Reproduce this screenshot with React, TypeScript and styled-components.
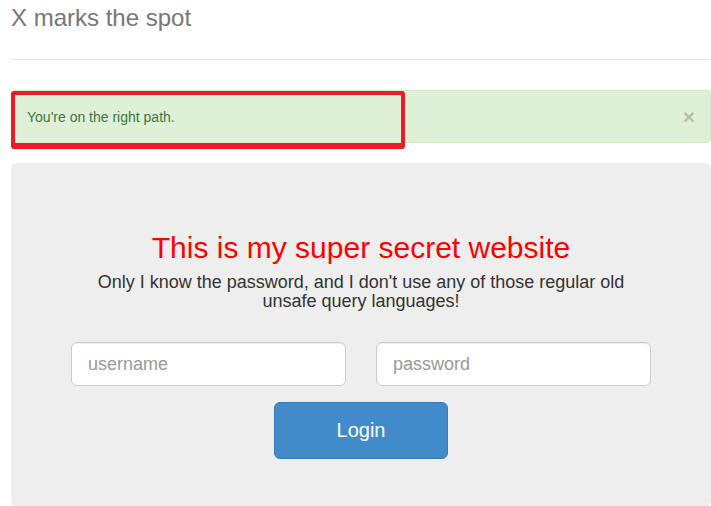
import React from "react";
import styled, { createGlobalStyle } from "styled-components";

const GlobalStyle = createGlobalStyle`
  body {
    margin: 0;
    background: #fff;
    font-family: "Liberation Sans", Arial, sans-serif;
    font-size: 14px;
    line-height: 20px;
    color: #333;
  }
`;

const App = (): JSX.Element => {
  return (
    <>
      <GlobalStyle />
      <Page>
        <Header>
          <HeaderTitle>X marks the spot</HeaderTitle>
        </Header>

        <AlertWrap>
          <Alert>
            <span>You're on the right path.</span>
            <CloseBtn type="button" aria-label="Close">
              ×
            </CloseBtn>
          </Alert>
          <Highlight />
        </AlertWrap>

        <Jumbotron>
          <JumboTitle>This is my super secret website</JumboTitle>
          <JumboText>
            Only I know the password, and I don't use any of those regular old
            <br />
            unsafe query languages!
          </JumboText>
          <LoginForm onSubmit={(e) => e.preventDefault()}>
            <InputRow>
              <TextInput type="text" placeholder="username" />
              <TextInput type="password" placeholder="password" />
            </InputRow>
            <LoginButton type="submit">Login</LoginButton>
          </LoginForm>
        </Jumbotron>
      </Page>
    </>
  );
};

const Page = styled.div`
  width: 700px;
  padding-left: 11px;
`;

const Header = styled.div`
  padding: 5px 0 28px;
  border-bottom: 1px solid #e5e5e5;
  margin-bottom: 30px;
`;

const HeaderTitle = styled.h3`
  margin: 0;
  font-size: 24px;
  font-weight: 400;
  line-height: 26px;
  color: #777;
`;

const AlertWrap = styled.div`
  position: relative;
  margin-bottom: 20px;
`;

const Alert = styled.div`
  display: flex;
  align-items: center;
  justify-content: space-between;
  padding: 15px;
  background: #dff0d8;
  border: 1px solid #d6e9c6;
  border-radius: 4px;
  color: #3c763d;
`;

const CloseBtn = styled.button`
  padding: 0;
  border: 0;
  background: transparent;
  font-family: inherit;
  font-size: 21px;
  font-weight: 700;
  line-height: 1;
  color: #000;
  opacity: 0.2;
  cursor: pointer;
`;

const Highlight = styled.div`
  position: absolute;
  left: 0;
  top: 1px;
  width: 394px;
  height: 58px;
  box-sizing: border-box;
  border: 4px solid #ed1c24;
  border-bottom-width: 6px;
  border-radius: 3px;
  pointer-events: none;
`;

const Jumbotron = styled.div`
  padding: 48px 60px;
  background: #eee;
  border-radius: 6px;
  text-align: center;
`;

const JumboTitle = styled.h2`
  margin: 20px 0 10px;
  font-size: 30px;
  font-weight: 400;
  line-height: 33px;
  color: #ff0000;
`;

const JumboText = styled.p`
  margin: -1px 0 31px;
  font-size: 18px;
  line-height: 19px;
  color: #333;
`;

const LoginForm = styled.form`
  display: flex;
  flex-direction: column;
  align-items: center;
  gap: 16px;
`;

const InputRow = styled.div`
  display: grid;
  grid-template-columns: 1fr 1fr;
  gap: 30px;
  width: 100%;
`;

const TextInput = styled.input`
  box-sizing: border-box;
  height: 44px;
  padding: 10px 16px;
  border: 1px solid #ccc;
  border-radius: 6px;
  background: #fff;
  font-family: "Liberation Sans", Arial, sans-serif;
  font-size: 18px;
  color: #555;
  box-shadow: inset 0 1px 1px rgba(0, 0, 0, 0.075);

  &::placeholder {
    color: #999;
  }
`;

const LoginButton = styled.button`
  box-sizing: border-box;
  width: 174px;
  height: 57px;
  border: 1px solid #357ebd;
  border-radius: 6px;
  background: #428bca;
  color: #fff;
  font-family: "Liberation Sans", Arial, sans-serif;
  font-size: 20px;
  cursor: pointer;
`;

export default App;
